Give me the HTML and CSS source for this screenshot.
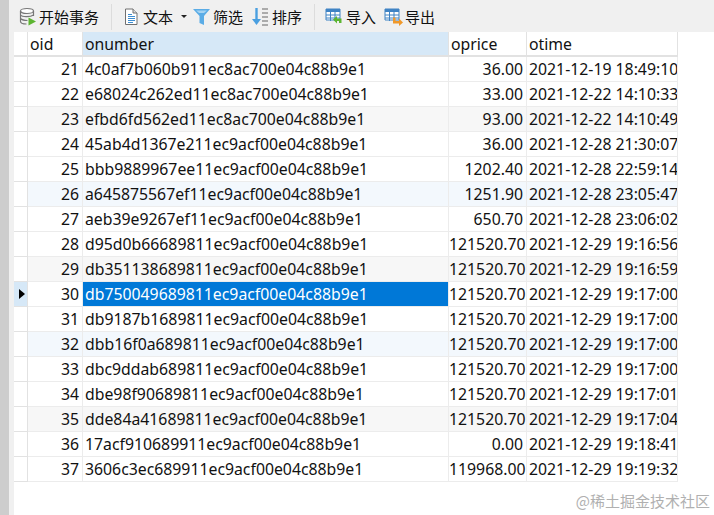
FILE: index.html
```html
<!DOCTYPE html>
<html lang="zh">
<head>
<meta charset="utf-8">
<title>orders</title>
<link rel="stylesheet" href="styles.css">
</head>
<body>
<div class="app">
  <div class="toolbar">
    <div class="tool tool-first">
      <svg class="ico" width="18" height="20" viewBox="0 0 18 20"><ellipse cx="8" cy="4" rx="6.500" ry="2.500" fill="#fff" stroke="#777" stroke-width="1.200"/><path d="M1.500 4V14.500C1.500 16 4.500 17 7.500 17M14.500 4V9M1.500 8C3 10 11 10.500 14.500 8M1.500 11.500C3 13 6 13.500 8.500 13.500" fill="none" stroke="#777" stroke-width="1.200"/><path d="M9.500 10.500L17 14.500L9.500 18.500Z" fill="#5cb531"/></svg>
      <span>开始事务</span>
    </div>
    <div class="sep"></div>
    <div class="tool tool-text">
      <svg class="ico" width="16" height="18" viewBox="0 0 16 18"><path d="M2.500 1H10L14 5V16.500H2.500Z" fill="#fff" stroke="#707070"/><path d="M10 1V5H14" fill="#ddd" stroke="#707070"/><path d="M5 6.500H9M5 8.500H12M5 10.500H12M5 12.500H12M5 14.500H10" stroke="#3f8ed1"/></svg>
      <span>文本</span>
      <span class="caret"></span>
    </div>
    <div class="tool tool-filter">
      <svg class="ico" width="20" height="18" viewBox="0 0 20 18"><path d="M1 1H18L12 8V17L7.500 15V8Z" fill="#5aace6"/><path d="M4 2.500H15L12 5H7Z" fill="#a5d3f2"/></svg>
      <span>筛选</span>
    </div>
    <div class="tool tool-sort">
      <svg class="ico" width="17" height="20" viewBox="0 0 17 20"><path d="M4.500 1V13" stroke="#4a9fe0" stroke-width="2.400"/><path d="M0 12H9L4.500 18Z" fill="#4a9fe0"/><path d="M10 2H16M10 6H16M10 10H16M10 14H16M10 18H16" stroke="#666" stroke-width="1.200"/></svg>
      <span>排序</span>
    </div>
    <div class="sep sep-b"></div>
    <div class="tool tool-io">
      <svg class="ico" width="20" height="18" viewBox="0 0 20 18"><path d="M1 1H15V12H1Z" fill="#fff" stroke="#3f83c4"/><path d="M1 1H15V4H1Z" fill="#3f83c4"/><path d="M1 7H15M1 10H15M5.500 4V13M10 4V13" stroke="#3f83c4"/><path d="M12 8V10.500H16.500V15H14V13H12V15.500L8 11.500Z" fill="#5cb531"/></svg>
      <span>导入</span>
    </div>
    <div class="tool tool-io">
      <svg class="ico" width="20" height="18" viewBox="0 0 20 18"><path d="M1 1H15V12H1Z" fill="#fff" stroke="#3f83c4"/><path d="M1 1H15V4H1Z" fill="#3f83c4"/><path d="M1 7H15M1 10H15M5.500 4V13M10 4V13" stroke="#3f83c4"/><path d="M9 9.500H11.500V13H15V10.500L19 14.500L15 18V15.500H9Z" fill="#f0982a"/></svg>
      <span>导出</span>
    </div>
  </div>
  <div class="grid-wrap">
    <table class="grid">
      <colgroup><col class="c0"><col class="c1"><col class="c2"><col class="c3"><col class="c4"></colgroup>
      <thead>
        <tr><th class="ind"></th><th>oid</th><th class="on">onumber</th><th>oprice</th><th>otime</th></tr>
      </thead>
      <tbody>
        <tr><td class="ind"></td><td class="r">21</td><td>4c0af7b060b911ec8ac700e04c88b9e1</td><td class="r">36.00</td><td>2021-12-19 18:49:10</td></tr>
        <tr><td class="ind"></td><td class="r">22</td><td>e68024c262ed11ec8ac700e04c88b9e1</td><td class="r">33.00</td><td>2021-12-22 14:10:33</td></tr>
        <tr class="alt"><td class="ind"></td><td class="r">23</td><td>efbd6fd562ed11ec8ac700e04c88b9e1</td><td class="r">93.00</td><td>2021-12-22 14:10:49</td></tr>
        <tr><td class="ind"></td><td class="r">24</td><td>45ab4d1367e211ec9acf00e04c88b9e1</td><td class="r">36.00</td><td>2021-12-28 21:30:07</td></tr>
        <tr><td class="ind"></td><td class="r">25</td><td>bbb9889967ee11ec9acf00e04c88b9e1</td><td class="r">1202.40</td><td>2021-12-28 22:59:14</td></tr>
        <tr class="tint"><td class="ind"></td><td class="r">26</td><td>a645875567ef11ec9acf00e04c88b9e1</td><td class="r">1251.90</td><td>2021-12-28 23:05:47</td></tr>
        <tr><td class="ind"></td><td class="r">27</td><td>aeb39e9267ef11ec9acf00e04c88b9e1</td><td class="r">650.70</td><td>2021-12-28 23:06:02</td></tr>
        <tr><td class="ind"></td><td class="r">28</td><td>d95d0b66689811ec9acf00e04c88b9e1</td><td class="r">121520.70</td><td>2021-12-29 19:16:56</td></tr>
        <tr class="alt"><td class="ind"></td><td class="r">29</td><td>db351138689811ec9acf00e04c88b9e1</td><td class="r">121520.70</td><td>2021-12-29 19:16:59</td></tr>
        <tr class="cur"><td class="ind"><span class="arrow"></span></td><td class="r">30</td><td class="sel">db750049689811ec9acf00e04c88b9e1</td><td class="r">121520.70</td><td>2021-12-29 19:17:00</td></tr>
        <tr><td class="ind"></td><td class="r">31</td><td>db9187b1689811ec9acf00e04c88b9e1</td><td class="r">121520.70</td><td>2021-12-29 19:17:00</td></tr>
        <tr class="tint"><td class="ind"></td><td class="r">32</td><td>dbb16f0a689811ec9acf00e04c88b9e1</td><td class="r">121520.70</td><td>2021-12-29 19:17:00</td></tr>
        <tr><td class="ind"></td><td class="r">33</td><td>dbc9ddab689811ec9acf00e04c88b9e1</td><td class="r">121520.70</td><td>2021-12-29 19:17:00</td></tr>
        <tr><td class="ind"></td><td class="r">34</td><td>dbe98f90689811ec9acf00e04c88b9e1</td><td class="r">121520.70</td><td>2021-12-29 19:17:01</td></tr>
        <tr class="alt"><td class="ind"></td><td class="r">35</td><td>dde84a41689811ec9acf00e04c88b9e1</td><td class="r">121520.70</td><td>2021-12-29 19:17:04</td></tr>
        <tr><td class="ind"></td><td class="r">36</td><td>17acf910689911ec9acf00e04c88b9e1</td><td class="r">0.00</td><td>2021-12-29 19:18:41</td></tr>
        <tr><td class="ind"></td><td class="r">37</td><td>3606c3ec689911ec9acf00e04c88b9e1</td><td class="r">119968.00</td><td>2021-12-29 19:19:32</td></tr>
      </tbody>
    </table>
  </div>
</div>
<div class="watermark">@稀土掘金技术社区</div>
</body>
</html>
```
FILE: styles.css
```css
* { box-sizing: border-box; }
html, body { margin: 0; height: 100%; }
body {
  width: 714px;
  height: 515px;
  overflow: hidden;
  position: relative;
  background: #fff;
  font-family: "Noto Sans", "Noto Sans CJK SC", sans-serif;
  color: #111;
  border-left: 9px solid #cdcdcd;
}
.app { display: flex; flex-direction: column; height: 100%; }
.toolbar {
  height: 32px;
  flex: none;
  background: #f0f0f0;
  display: flex;
  align-items: center;
  padding: 1px 0 0 10px;
  font-family: "Noto Sans CJK SC", sans-serif;
  font-size: 15px;
}
.tool { display: flex; align-items: center; gap: 2px; white-space: nowrap; }
.sep { width: 1px; height: 26px; background: #dcdcdc; margin: 0 11px 0 12px; }
.sep-b { margin: 0 10px 0 12px; }
.tool-text { gap: 4px; }
.caret {
  width: 0;
  height: 0;
  margin-left: 4px;
  border-left: 3px solid transparent;
  border-right: 3px solid transparent;
  border-top: 3px solid #222;
}
.tool-filter { margin-left: 5px; gap: 1px; }
.tool-sort { margin-left: 9px; gap: 3px; }
.tool-io { margin-right: 8px; gap: 1px; }
.grid-wrap {
  flex: 1;
  background: #fff;
  border-left: 5px solid #f0f0f0;
  min-height: 0;
}
.grid {
  border-collapse: separate;
  border-spacing: 0;
  table-layout: fixed;
  width: 664px;
  font-size: 15.800px;
  line-height: 20px;
}
.c0 { width: 14px; }
.c1 { width: 55px; }
.c2 { width: 366px; }
.c3 { width: 78px; }
.c4 { width: 151px; }
.grid th, .grid td {
  height: 25px;
  padding: 0 0 0 2px;
  border-right: 1px solid #ececec;
  border-bottom: 1px solid #ececec;
  font-weight: 400;
  text-align: left;
  white-space: nowrap;
  overflow: hidden;
}
.grid th {
  border-right-color: #e2e2e2;
  border-bottom: 2px solid #e2e2e2;
}
.grid th.on { background: #d6e8f7; }
.grid .ind { padding: 0; border-right: 1px solid #e2e2e2; border-bottom-color: #e2e2e2; }
.grid td.r { text-align: right; padding: 0 3px 0 0; overflow: visible; }
.alt td { background: #f7f7f7; }
.tint td { background: #f3f8fd; }
.alt .ind, .tint .ind { background: #fff; }
.cur .ind { background: #d6e8f7; }
.grid td.sel { background: #0078d7; color: #fff; }
.arrow {
  display: block;
  width: 0;
  height: 0;
  margin-left: 5px;
  border-top: 5.500px solid transparent;
  border-bottom: 5.500px solid transparent;
  border-left: 6px solid #000;
}
.watermark {
  position: absolute;
  right: 4px;
  bottom: 4px;
  font-size: 15px;
  line-height: 20px;
  color: #b0b0b0;
  font-family: "Noto Sans CJK SC", sans-serif;
}
```
